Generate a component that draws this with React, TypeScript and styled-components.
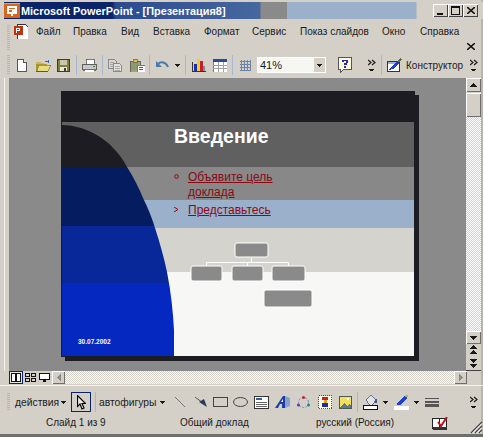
import React from "react";
import styled, { createGlobalStyle } from "styled-components";

const Global = createGlobalStyle`
  html, body { margin: 0; padding: 0; background: #d4d0c8; }
  #root { width: 483px; height: 437px; overflow: hidden; }
`;

const FACE = "#d4d0c8";
const UI_FONT = `"Liberation Sans", Arial, sans-serif`;
const dither = `repeating-conic-gradient(#ffffff 0 25%, ${FACE} 0 50%) 0 0 / 2px 2px`;

const Window = styled.div`
  width: 483px; height: 437px; display: flex; flex-direction: column;
  background: ${FACE}; color: #1a1a1a; font: 10px ${UI_FONT}; overflow: hidden;
  box-shadow: inset -2px 0 0 #b8b4ac;
`;

const TitleBar = styled.div`
  height: 17px; margin: 2px 0 1px 4px; display: flex; align-items: center; flex: none;
  background: linear-gradient(to right,
    #0a246a 0, #0a246a 108px, #2c4a8e 112px, #46689f 256px,
    #8a8a8a 257px, #8a8a8a 283px,
    #9ab0cb 283px, #9ab0cb 412px, ${FACE} 413px);
`;
const TitleText = styled.span`
  margin-left: 1px; color: #fff; font: bold 10.9px ${UI_FONT}; white-space: nowrap; width: 412px;
`;
const WinButtons = styled.div`display: flex; margin-left: 0;`;
const WinButton = styled.div`
  width: 15px; height: 13px; background: ${FACE}; display: flex; align-items: center; justify-content: center;
  box-shadow: inset 1px 1px 0 #fff, inset -1px -1px 0 #404040;
`;

const MenuBar = styled.div`height: 32px; display: flex; flex: none; padding-left: 7px;`;
const Gripper = styled.div<{ $h: number; $mt?: number }>`
  width: 3px; height: ${(p) => p.$h}px; margin-top: ${(p) => p.$mt ?? 0}px; flex: none;
  background: repeating-linear-gradient(to bottom, #a6b8cf 0 1px, transparent 1px 2px);
`;
const MenuColumn = styled.div`flex: 1; display: flex; flex-direction: column; padding-left: 4px;`;
const MenuRow = styled.div`height: 21px; display: flex; align-items: center;`;
const MenuIconSlot = styled.div`width: 22px; flex: none; display: flex; margin-top: 1px;`;
const MenuItem = styled.span<{ $w: number }>`
  width: ${(p) => p.$w}px; flex: none; font-size: 10px; white-space: nowrap; margin-top: 1px;
`;
const CloseRow = styled.div`height: 11px; display: flex; justify-content: flex-end; padding-right: 8px; align-items: center;`;

const ToolBar = styled.div`height: 26px; display: flex; align-items: center; padding-left: 7px; flex: none;`;
const Slot = styled.div<{ $w: number }>`
  width: ${(p) => p.$w}px; flex: none; display: flex; align-items: center; justify-content: center;
`;
const Sep = styled.div<{ $w: number }>`
  width: ${(p) => p.$w}px; height: 20px; flex: none; display: flex; justify-content: center;
  &::before { content: ""; width: 1px; background: #a6b8cf; }
`;
const Combo = styled.div`
  width: 69px; height: 16px; margin-left: 1px; flex: none; background: #f6f6f3; display: flex; align-items: center;
  box-shadow: inset 0 0 0 1px #fff;
`;
const ComboValue = styled.span`flex: 1; padding-left: 3px; font-size: 11px;`;
const ComboArrow = styled.div`
  width: 11px; height: 14px; margin-right: 1px; background: ${FACE}; display: flex; align-items: center; justify-content: center;
`;
const DesignText = styled.span`width: 58px; flex: none; font-size: 10px; white-space: nowrap;`;

const Main = styled.div`
  height: 293px; display: flex; flex: none; margin-left: 4px; border-left: 1px solid #f4f2ee; padding-left: 4px; padding-right: 2px;
`;
const Workspace = styled.div`flex: 1; background: #8a8a8a; padding: 13px 0 0 52px; overflow: hidden;`;
const VScroll = styled.div`width: 15px; flex: none; display: flex; flex-direction: column; background: ${FACE};`;
const ScrollBtn = styled.div<{ $h: number }>`
  height: ${(p) => p.$h}px; flex: none; background: ${FACE}; display: flex; align-items: center; justify-content: center;
  box-shadow: inset 1px 1px 0 #fff, inset -1px -1px 0 #6e6e6e;
`;
const Thumb = styled(ScrollBtn)`margin-top: 1px;`;
const Track = styled.div`flex: 1; background: ${dither};`;
const PageNav = styled.div`
  height: 27px; flex: none; display: flex; flex-direction: column; align-items: center; justify-content: space-between;
  padding: 1px 0 2px; border-bottom: 1px solid #404040; box-sizing: border-box;
`;

const Slide = styled.div`
  position: relative; width: 354px; height: 266px; box-sizing: border-box; padding: 31px 1px 1px;
  background: #1c1c22; box-shadow: 4px 4px 0 #1c1c22;
  font-family: ${UI_FONT};
`;
const Band = styled.div<{ $h: number; $bg: string }>`height: ${(p) => p.$h}px; background: ${(p) => p.$bg}; box-sizing: border-box;`;
const TitleBand = styled(Band)`padding: 2px 0 0 112px;`;
const SlideTitle = styled.div`color: #fff; font: bold 19.5px/24px ${UI_FONT};`;
const BulletBand = styled(Band)`padding: 3px 0 0 112px; display: flex;`;
const Bullet = styled.div`width: 14px; flex: none; padding-top: 4px; color: #8a0a14;`;
const BulletText = styled.div`
  width: 100px; color: #8a0a14; font: 12px/15px ${UI_FONT}; text-decoration: underline; text-decoration-thickness: 1px;
`;
const Overlay = styled.svg`position: absolute; left: 1px; top: 0; pointer-events: none;`;
const DateLabel = styled.div`position: absolute; left: 17px; top: 247px; color: #fff; font: bold 6.5px/8px ${UI_FONT};`;

const HScroll = styled.div`height: 13px; margin-left: 9px; margin-right: 16px; flex: none; display: flex; align-items: stretch; background: ${FACE};`;
const ViewBtn = styled.div<{ $active?: boolean; $w: number }>`
  width: ${(p) => p.$w}px; flex: none; box-sizing: border-box; display: flex; align-items: center; justify-content: center;
  ${(p) => (p.$active ? "outline: 1px solid #0a246a; outline-offset: -1px; background: #e8e6e0;" : "")}
`;
const HBtn = styled.div`
  width: 13px; flex: none; background: ${FACE}; display: flex; align-items: center; justify-content: center;
  box-shadow: inset 1px 1px 0 #fff, inset -1px -1px 0 #6e6e6e;
`;
const Divider = styled.div`height: 6px; flex: none; box-sizing: border-box; border-top: 1px solid #f4f2ee; margin-top: 1px;`;

const DrawBar = styled.div`height: 22px; display: flex; align-items: center; flex: none; padding-left: 7px;`;
const DrawLabel = styled.span<{ $w: number }>`width: ${(p) => p.$w}px; flex: none; font-size: 10.300px; white-space: nowrap;`;
const SelectBox = styled.div`
  width: 20px; height: 20px; flex: none; box-sizing: border-box; border: 1px solid #0a246a; display: flex; align-items: center; justify-content: center;
`;

const StatusBar = styled.div`height: 21px; box-sizing: border-box; display: flex; flex: none;`;
const StatusCell = styled.span<{ $w: number; $pl: number }>`
  width: ${(p) => p.$w}px; padding-left: ${(p) => p.$pl}px; padding-top: 4px; box-sizing: border-box; flex: none; font-size: 10px; white-space: nowrap;
`;
const SpellSlot = styled.div`width: 17px; flex: none; padding-top: 4px;`;
const GripSlot = styled.div`margin-left: auto; align-self: flex-end; flex: none;`;
const BottomEdge = styled.div`height: 3px; flex: none; background: #6e6e6e;`;

const Svg = styled.svg`display: block; shape-rendering: crispEdges; flex: none;`;
const Ico = ({ w, h, children, smooth }: { w: number; h: number; children: React.ReactNode; smooth?: boolean }) => (
  <Svg width={w} height={h} viewBox={`0 0 ${w} ${h}`} style={smooth ? { shapeRendering: "auto" } : undefined}>{children}</Svg>
);

const Down = ({ c = "#1a1a1a" }: { c?: string }) => <Ico w={5} h={3}><path d="M0 0h5v1h-1v1h-1v1h-1v-1h-1v-1h-1z" fill={c} /></Ico>;
const Chevron = () => (
  <Ico w={8} h={13}>
    <path d="M0 1l3 2.5-3 2.5M4 1l3 2.5-3 2.5" fill="none" stroke="#1a1a1a" strokeWidth="1.2" style={{ shapeRendering: "auto" }} />
    <path d="M1 10h5v1h-1v1h-3v-1h-1z" fill="#1a1a1a" />
  </Ico>
);
const AppIcon = () => (
  <Ico w={16} h={15}>
    <rect width="16" height="15" fill="#d9661f" />
    <rect x="0" y="0" width="16" height="1" fill="#f0a060" />
    <rect x="3" y="3" width="10" height="8" fill="#fff" />
    <rect x="5" y="5" width="6" height="1" fill="#d9661f" />
    <rect x="5" y="7" width="3" height="2" fill="#d9661f" />
    <rect x="7" y="11" width="2" height="2" fill="#fff" />
  </Ico>
);
const PptDoc = () => (
  <Ico w={14} h={15}>
    <path d="M3 0h8l3 3v12h-11z" fill="#fff" stroke="#333" strokeWidth="1" />
    <rect x="0" y="2" width="9" height="9" fill="#b8330f" />
    <rect x="2" y="4" width="4" height="1" fill="#fff" />
    <rect x="2" y="4" width="1" height="5" fill="#fff" />
    <rect x="5" y="4" width="1" height="3" fill="#fff" />
    <rect x="2" y="6" width="4" height="1" fill="#fff" />
  </Ico>
);
const NewDoc = () => <Ico w={10} h={13}><path d="M.5.5h6l3 3v9h-9z" fill="#fff" stroke="#555" /><path d="M6.5.5v3h3" fill="#ddd" stroke="#555" /></Ico>;
const OpenFolder = () => (
  <Ico w={15} h={13}>
    <path d="M9 2h3M12 1v3" stroke="#3a6aa8" />
    <path d="M0 3h5v1h3v2h-8z" fill="#c8b860" />
    <path d="M0 5h11v7h-11z" fill="#a89830" />
    <path d="M3 6h12l-3 6h-11z" fill="#e8dc80" stroke="#7a6a20" strokeWidth=".6" />
    <rect y="12" width="12" height="1" fill="#555" />
  </Ico>
);
const Save = () => (
  <Ico w={13} h={13}>
    <rect width="13" height="13" fill="#3a3a3a" />
    <rect x="1" y="1" width="11" height="11" fill="#808040" />
    <rect x="3" y="1" width="7" height="5" fill="#c8c8a8" />
    <rect x="3" y="8" width="7" height="4" fill="#e8e8d8" />
    <rect x="7" y="9" width="2" height="3" fill="#3a3a3a" />
  </Ico>
);
const Printer = () => (
  <Ico w={15} h={13}>
    <path d="M4 0h8v5h-8z" fill="#fff" stroke="#555" strokeWidth=".8" />
    <path d="M1 5h13l1 5h-15z" fill="#c8c8c8" stroke="#444" strokeWidth=".8" />
    <rect x="1" y="10" width="13" height="2" fill="#707070" />
    <rect x="3" y="11" width="9" height="2" fill="#fff" />
    <rect x="11" y="7" width="2" height="1" fill="#3a8a3a" />
  </Ico>
);
const Copy = () => (
  <Ico w={14} h={13}>
    <path d="M.5.5h6l2 2v7h-8z" fill="#d8d6d0" stroke="#8a8a8a" />
    <path d="M5.5 4.5h6l2 2v6h-8z" fill="#e4e2dc" stroke="#8a8a8a" />
    <path d="M7 7h5M7 9h5M7 11h5" stroke="#a8a8a8" />
    <path d="M2 3h4M2 5h3M2 7h3" stroke="#a8a8a8" />
  </Ico>
);
const Paste = () => (
  <Ico w={16} h={13}>
    <rect x="1" y="2" width="10" height="11" fill="#a8a070" stroke="#555" strokeWidth=".8" />
    <rect x="4" y="0" width="4" height="3" fill="#e0c040" stroke="#555" strokeWidth=".6" />
    <rect x="2" y="4" width="7" height="7" fill="#8a9a70" />
    <rect x="8" y="6" width="8" height="7" fill="#fff" stroke="#3a5a9a" strokeWidth=".8" />
    <rect x="10" y="8" width="4" height="1" fill="#3a5a9a" />
    <rect x="10" y="10" width="4" height="1" fill="#3a5a9a" />
  </Ico>
);
const Undo = () => (
  <Ico w={13} h={11} smooth>
    <path d="M2 4 C5 1 10 2 12 7" fill="none" stroke="#4a78b0" strokeWidth="2" />
    <path d="M0 1v6h6z" fill="#4a78b0" />
  </Ico>
);
const ChartIcon = () => (
  <Ico w={14} h={14}>
    <rect x="0" y="13" width="14" height="1" fill="#333" />
    <rect x="0" y="4" width="1" height="10" fill="#333" />
    <rect x="2" y="6" width="3" height="7" fill="#1c2ea8" />
    <rect x="5" y="1" width="3" height="12" fill="#f0d020" />
    <rect x="8" y="3" width="3" height="10" fill="#c02030" />
    <rect x="11" y="8" width="2" height="5" fill="#888" />
  </Ico>
);
const TableIcon = () => (
  <Ico w={14} h={13}>
    <rect width="14" height="13" fill="#fff" stroke="#777" />
    <rect width="14" height="3" fill="#2c4a9a" />
    <path d="M0 6h14M0 9h14M5 3v10M10 3v10" stroke="#a0a0a0" />
  </Ico>
);
const GridIcon = () => (
  <Ico w={11} h={11}>
    <path d="M1 0v11M4 0v11M7 0v11M10 0v11M0 1h11M0 4h11M0 7h11M0 10h11" stroke="#6a84ac" />
  </Ico>
);
const HelpIcon = () => (
  <Ico w={14} h={16}>
    <path d="M.5.5h13v12h-8l-3 3v-3h-2z" fill="#fffbe0" stroke="#555" />
    <rect x="5" y="3" width="4" height="1" fill="#1c2ea8" />
    <rect x="8" y="3" width="2" height="3" fill="#1c2ea8" />
    <rect x="6" y="6" width="3" height="2" fill="#1c2ea8" />
    <rect x="6" y="9" width="2" height="2" fill="#1c2ea8" />
    <rect x="4" y="3" width="2" height="2" fill="#1c2ea8" />
  </Ico>
);
const DesignIcon = () => (
  <Ico w={15} h={14}>
    <rect x=".5" y="3.500" width="12" height="10" fill="#fff" stroke="#333" />
    <rect x="1" y="4" width="11" height="2" fill="#9ab0cb" />
    <path d="M2 12L4 9 10 3 12 5 6 11z" fill="#1c40c8" />
    <path d="M10 3l3-3 2 1-3 4z" fill="#6a6a3a" />
  </Ico>
);

const Cursor = () => (
  <Ico w={9} h={15} smooth>
    <path d="M.5.5v11l2.5-2.5 2 5 2-1-2-4.5h3.500z" fill="#e8e8e8" stroke="#000" strokeWidth="1.200" />
  </Ico>
);
const LineTool = () => <Ico w={10} h={10} smooth><path d="M0 0L10 10" stroke="#777" /></Ico>;
const ArrowTool = () => <Ico w={12} h={10} smooth><path d="M0 0L8 6" stroke="#555" /><path d="M4 5L9 2 12 10z" fill="#2a3a5a" /></Ico>;
const RectTool = () => <Ico w={15} h={10}><rect x=".5" y=".5" width="14" height="9" fill="none" stroke="#444" /></Ico>;
const OvalTool = () => <Ico w={15} h={10} smooth><ellipse cx="7.5" cy="5" rx="7" ry="4.500" fill="none" stroke="#444" /></Ico>;
const TextBox = () => (
  <Ico w={15} h={13}>
    <rect x=".5" y=".5" width="14" height="12" fill="#fff" stroke="#333" />
    <rect x="2" y="2" width="6" height="2" fill="#3a5a9a" />
    <path d="M2 6h11M2 8h11M2 10h11" stroke="#666" />
  </Ico>
);
const WordArt = () => (
  <Ico w={15} h={14} smooth>
    <path d="M0 13L8 1h2v12H7V9H5l-2 4z" fill="#1c3ea8" />
    <path d="M10 1l5 2v8l-5 2z" fill="#8aa0c8" />
    <path d="M6 7h2V4z" fill="#fff" />
  </Ico>
);
const Diagram = () => (
  <Ico w={13} h={13} smooth>
    <circle cx="6.500" cy="6.500" r="5" fill="none" stroke="#6a88b8" strokeDasharray="2 1.500" />
    <circle cx="6.500" cy="1.500" r="1.500" fill="#c02030" />
    <circle cx="1.500" cy="9" r="1.500" fill="#7030a0" />
    <circle cx="11.500" cy="9" r="1.500" fill="#1c8a8a" />
  </Ico>
);
const ClipArt = () => (
  <Ico w={14} h={14}>
    <rect x=".5" y=".5" width="13" height="13" fill="#fffbe0" stroke="#555" strokeDasharray="1 1" />
    <rect x="4" y="2" width="6" height="3" fill="#c02030" />
    <rect x="6" y="5" width="3" height="3" fill="#e0a020" />
    <rect x="4" y="8" width="6" height="4" fill="#1c2ea8" />
  </Ico>
);
const Picture = () => (
  <Ico w={13} h={13}>
    <rect width="13" height="13" fill="#555" />
    <rect x="1" y="1" width="11" height="11" fill="#f0e060" />
    <path d="M1 12l4-5 3 3 2-2 2 2v2z" fill="#5a7a9a" />
    <rect x="8" y="2" width="2" height="2" fill="#fff" />
  </Ico>
);
const FillColor = () => (
  <Ico w={15} h={15}>
    <path d="M3 5L8 0l5 5-4 5h-2z" fill="#e4e4e4" stroke="#3a5a8a" strokeWidth=".8" />
    <rect x="12" y="4" width="2" height="4" fill="#3a5a8a" />
    <rect x=".5" y="10.500" width="14" height="4" fill="#fff" stroke="#111" />
  </Ico>
);
const LineColor = () => (
  <Ico w={15} h={15}>
    <path d="M3 8L11 1l2 2-7 7H3z" fill="#1c40c8" />
    <rect x="11" y="0" width="3" height="2" fill="#c8b040" />
    <rect x="0" y="11" width="15" height="4" fill="#fff" />
  </Ico>
);
const LineStyle = () => (
  <Ico w={14} h={9}>
    <rect width="14" height="1" fill="#555" />
    <rect y="3" width="14" height="2" fill="#555" />
    <rect y="6" width="14" height="3" fill="#555" />
  </Ico>
);
const SpellIcon = () => (
  <Ico w={17} h={13}>
    <rect x=".5" y="1.500" width="14" height="10" fill="#fff" stroke="#222" />
    <rect x="1" y="10" width="14" height="3" fill="#333" />
    <rect x="7" y="2" width="1" height="8" fill="#222" />
    <path d="M6 5l3 4 6-9" fill="none" stroke="#c01018" strokeWidth="2" style={{ shapeRendering: "auto" }} />
  </Ico>
);
const Grip = () => (
  <Ico w={14} h={13} smooth>
    <path d="M13 1L2 12M13 5L6 12M13 9L10 12" stroke="#404040" strokeWidth="1.400" fill="none" />
    <path d="M13 2.500L3.500 12M13 6.500L7.500 12M13 10.500L11.500 12" stroke="#fff" strokeWidth="1" fill="none" />
  </Ico>
);
const Tri = ({ up, c = "#1a1a1a" }: { up?: boolean; c?: string }) => (
  <Ico w={7} h={4}><path d={up ? "M3 0h1v1h1v1h1v1h1v1h-7v-1h1v-1h1v-1h1z" : "M0 0h7v1h-1v1h-1v1h-1v1h-1v-1h-1v-1h-1v-1h-1z"} fill={c} /></Ico>
);
const DoubleTri = ({ up }: { up?: boolean }) => (
  <Ico w={7} h={9}>
    {up
      ? <path d="M3 0h1v1h1v1h1v1h1v1h-7v-1h1v-1h1v-1h1zM3 5h1v1h1v1h1v1h1v1h-7v-1h1v-1h1v-1h1z" fill="#1a1a1a" />
      : <path d="M0 0h7v1h-1v1h-1v1h-1v1h-1v-1h-1v-1h-1v-1h-1zM0 5h7v1h-1v1h-1v1h-1v1h-1v-1h-1v-1h-1v-1h-1z" fill="#1a1a1a" />}
  </Ico>
);

/* slide-space coordinates match the window so the artwork reads off the picture directly */
const Curve = () => (
  <Overlay width={352} height={265} viewBox="62 91 352 265">
    <defs>
      <clipPath id="sweep">
        <path d="M62 125 C72 125 84 128 93 133 C102 138 108 142 113 148 C120 155 124 161 127 167 C134 178 139 188 143 198 C148 208 152 218 155 228 C160 243 164 258 167 272 C171 292 173 312 174 330 L174 356 L62 356 Z" />
      </clipPath>
    </defs>
    <g clipPath="url(#sweep)">
      <rect x="62" y="122" width="120" height="46" fill="#1c1c22" />
      <rect x="62" y="168" width="120" height="58" fill="#051c60" />
      <rect x="62" y="226" width="120" height="57" fill="#08289a" />
      <rect x="62" y="283" width="120" height="73" fill="#0428c0" />
    </g>
  </Overlay>
);
const OrgBox = ({ x, y, w, h }: { x: number; y: number; w: number; h: number }) => (
  <rect x={x} y={y} width={w} height={h} rx="2" fill="#8a8a8a" stroke="#fff" strokeWidth="1" />
);
const OrgChart = () => (
  <Overlay width={352} height={265} viewBox="62 91 352 265">
    <path d="M206.500 266V262.500H288.500V266M247.500 262.500V266M251.500 258V262" fill="none" stroke="#fff" />
    <OrgBox x={235} y={243} w={33} h={14} />
    <OrgBox x={191} y={266} w={31} h={15} />
    <OrgBox x={232} y={266} w={31} h={15} />
    <OrgBox x={272} y={266} w={33} h={15} />
    <OrgBox x={264} y={290} w={48} h={17} />
  </Overlay>
);

const menu: [string, number][] = [["Файл", 37], ["Правка", 48], ["Вид", 32], ["Вставка", 51], ["Формат", 48], ["Сервис", 48], ["Показ слайдов", 82], ["Окно", 38], ["Справка", 50]];

export default function App() {
  return (
    <Window>
      <Global />
      <TitleBar>
        <AppIcon />
        <TitleText>Microsoft PowerPoint - [Презентация8]</TitleText>
        <WinButtons>
          <WinButton><Ico w={7} h={8}><rect y="6" width="6" height="2" fill="#111" /></Ico></WinButton>
          <WinButton><Ico w={9} h={9}><rect x=".5" y="1" width="8" height="7.500" fill="none" stroke="#111" /><rect width="9" height="2" fill="#111" /></Ico></WinButton>
          <WinButton><Ico w={8} h={7} smooth><path d="M0 0L8 7M8 0L0 7" stroke="#111" strokeWidth="1.600" /></Ico></WinButton>
        </WinButtons>
      </TitleBar>

      <MenuBar>
        <Gripper $h={26} $mt={5} />
        <MenuColumn>
          <MenuRow>
            <MenuIconSlot><PptDoc /></MenuIconSlot>
            {menu.map(([t, w]) => <MenuItem key={t} $w={w}>{t}</MenuItem>)}
          </MenuRow>
          <CloseRow><Ico w={8} h={7} smooth><path d="M0 0L8 7M8 0L0 7" stroke="#111" strokeWidth="1.500" /></Ico></CloseRow>
        </MenuColumn>
      </MenuBar>

      <ToolBar>
        <Gripper $h={20} />
        <Slot $w={23}><NewDoc /></Slot>
        <Slot $w={20}><OpenFolder /></Slot>
        <Slot $w={21}><Save /></Slot>
        <Sep $w={4} />
        <Slot $w={22}><Printer /></Slot>
        <Sep $w={4} />
        <Slot $w={22}><Copy /></Slot>
        <Slot $w={21}><Paste /></Slot>
        <Sep $w={4} />
        <Slot $w={22}><Undo /></Slot>
        <Slot $w={9}><Down /></Slot>
        <Sep $w={6} />
        <Slot $w={22}><ChartIcon /></Slot>
        <Slot $w={19}><TableIcon /></Slot>
        <Sep $w={6} />
        <Slot $w={21}><GridIcon /></Slot>
        <Combo>
          <ComboValue>41%</ComboValue>
          <ComboArrow><Down /></ComboArrow>
        </Combo>
        <Slot $w={38}><HelpIcon /></Slot>
        <Slot $w={16}><Chevron /></Slot>
        <Sep $w={2} />
        <Slot $w={24}><DesignIcon /></Slot>
        <DesignText>Конструктор</DesignText>
        <Slot $w={19}><Chevron /></Slot>
      </ToolBar>

      <Main>
        <Workspace>
          <Slide>
            <TitleBand $h={45} $bg="#606060"><SlideTitle>Введение</SlideTitle></TitleBand>
            <BulletBand $h={33} $bg="#888888">
              <Bullet><Ico w={5} h={5} smooth><circle cx="2.500" cy="2.500" r="1.800" fill="none" stroke="#8a0a14" /></Ico></Bullet>
              <BulletText>Объявите цель доклада</BulletText>
            </BulletBand>
            <BulletBand $h={28} $bg="#9ab0cb">
              <Bullet><Ico w={5} h={5} smooth><path d="M0 0L4 2.500 0 5" fill="none" stroke="#8a0a14" /></Ico></Bullet>
              <BulletText>Представьтесь</BulletText>
            </BulletBand>
            <Band $h={44} $bg="#d4d3ce" />
            <Band $h={84} $bg="#f7f7f5" />
            <Curve />
            <OrgChart />
            <DateLabel>30.07.2002</DateLabel>
          </Slide>
        </Workspace>
        <VScroll>
          <ScrollBtn $h={14}><Tri up /></ScrollBtn>
          <Thumb $h={24} />
          <Track />
          <ScrollBtn $h={13}><Tri /></ScrollBtn>
          <PageNav><DoubleTri up /><DoubleTri /></PageNav>
        </VScroll>
      </Main>

      <HScroll>
        <ViewBtn $w={14} $active><Ico w={10} h={9}><rect x=".5" y=".5" width="9" height="8" fill="#fff" stroke="#111" /><rect x="4" width="2" height="9" fill="#111" /></Ico></ViewBtn>
        <ViewBtn $w={14}><Ico w={11} h={9}><path d="M.5.5h4v3h-4zM6.500.5h4v3h-4zM.5 5.500h4v3h-4zM6.500 5.500h4v3h-4z" fill="none" stroke="#111" /></Ico></ViewBtn>
        <ViewBtn $w={15}><Ico w={11} h={9}><rect x=".5" y=".5" width="10" height="6" fill="#fff" stroke="#111" /><rect x="4" y="7" width="3" height="2" fill="#111" /></Ico></ViewBtn>
        <HBtn><Ico w={4} h={7}><path d="M3 0h1v7h-1v-1h-1v-1h-1v-1h-1v-1h1v-1h1v-1h1z" fill="#8a8a8a" /></Ico></HBtn>
        <Track />
        <HBtn><Ico w={4} h={7}><path d="M0 0h1v1h1v1h1v1h1v1h-1v1h-1v1h-1v1h-1z" fill="#8a8a8a" /></Ico></HBtn>
      </HScroll>
      <Divider />

      <DrawBar>
        <Gripper $h={18} />
        <Slot $w={5} />
        <DrawLabel $w={46}>действия</DrawLabel>
        <Down />
        <Slot $w={5} />
        <SelectBox><Cursor /></SelectBox>
        <Sep $w={8} />
        <DrawLabel $w={61}>автофигуры</DrawLabel>
        <Down />
        <Slot $w={9} />
        <Slot $w={11}><LineTool /></Slot>
        <Slot $w={10} />
        <Slot $w={12}><ArrowTool /></Slot>
        <Slot $w={6} />
        <Slot $w={15}><RectTool /></Slot>
        <Slot $w={5} />
        <Slot $w={15}><OvalTool /></Slot>
        <Slot $w={6} />
        <Slot $w={15}><TextBox /></Slot>
        <Slot $w={6} />
        <Slot $w={15}><WordArt /></Slot>
        <Slot $w={7} />
        <Slot $w={13}><Diagram /></Slot>
        <Slot $w={8} />
        <Slot $w={14}><ClipArt /></Slot>
        <Slot $w={7} />
        <Slot $w={13}><Picture /></Slot>
        <Sep $w={11} />
        <Slot $w={15}><FillColor /></Slot>
        <Slot $w={5} />
        <Down />
        <Slot $w={6} />
        <Slot $w={15}><LineColor /></Slot>
        <Slot $w={5} />
        <Down />
        <Slot $w={6} />
        <Slot $w={14}><LineStyle /></Slot>
        <Slot $w={31} />
        <Chevron />
      </DrawBar>

      <StatusBar>
        <StatusCell $w={134} $pl={46}>Слайд 1 из 9</StatusCell>
        <StatusCell $w={136} $pl={46}>Общий доклад</StatusCell>
        <StatusCell $w={162} $pl={46}>русский (Россия)</StatusCell>
        <SpellSlot><SpellIcon /></SpellSlot>
        <GripSlot><Grip /></GripSlot>
      </StatusBar>
      <BottomEdge />
    </Window>
  );
}
